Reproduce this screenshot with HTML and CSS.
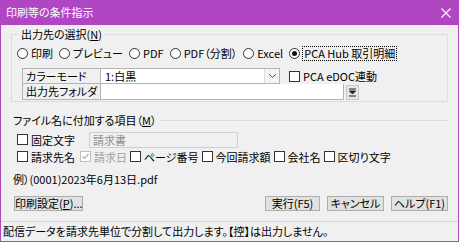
FILE: index.html
```html
<!DOCTYPE html>
<html lang="ja">
<head>
<meta charset="utf-8">
<link rel="stylesheet" href="styles.css">
</head>
<body>
<div class="window">
  <div class="titlebar">
    <span class="title">印刷等の条件指示</span>
    <span class="close">
      <svg width="10" height="10" viewBox="0 0 10 10"><path d="M0.5 0.5 L9.5 9.5 M9.5 0.5 L0.5 9.5" stroke="#ffffff" stroke-width="1.1"/></svg>
    </span>
  </div>
  <div class="content">
    <fieldset class="group">
      <legend class="legend">出力先の選択(<u>N</u>)</legend>
      <div class="radios">
        <label class="opt"><span class="radio"></span>印刷</label>
        <label class="opt"><span class="radio"></span>プレビュー</label>
        <label class="opt"><span class="radio"></span>PDF</label>
        <label class="opt"><span class="radio"></span>PDF（分割）</label>
        <label class="opt"><span class="radio"></span>Excel</label>
        <label class="opt"><span class="radio on"></span><span class="focus">PCA Hub 取引明細</span></label>
      </div>
      <div class="trow">
        <div class="tlabel">カラーモード</div>
        <div class="select"><span class="sval">1:白黒</span><span class="sarrow"><svg width="9" height="6" viewBox="0 0 9 6"><path d="M1 1 L4.5 4.5 L8 1" fill="none" stroke="#555" stroke-width="1"/></svg></span></div>
        <label class="opt eDoc"><span class="check"></span>PCA eDOC連動</label>
      </div>
      <div class="trow">
        <div class="tlabel">出力先フォルダ</div>
        <div class="input"></div>
        <span class="dropbtn"><svg width="9" height="9" viewBox="0 0 9 9"><path d="M1 1 H8 M1.5 3 L4.5 6 L7.5 3 Z M1 8 H8" fill="#222" stroke="#222" stroke-width="1"/></svg></span>
      </div>
    </fieldset>

    <div class="section">
      <span class="stitle">ファイル名に付加する項目（<u>M</u>）</span>
      <span class="sline"></span>
    </div>
    <div class="fixrow">
      <label class="opt"><span class="check"></span>固定文字</label>
      <div class="fixinput">請求書</div>
    </div>
    <div class="checks">
      <label class="opt"><span class="check"></span>請求先名</label>
      <label class="opt disabled"><span class="check checked dis"><svg width="9" height="9" viewBox="0 0 9 9"><path d="M1.5 4.5 L3.5 6.5 L7.5 2" fill="none" stroke="#b0b0b0" stroke-width="1.2"/></svg></span>請求日</label>
      <label class="opt"><span class="check"></span>ページ番号</label>
      <label class="opt"><span class="check"></span>今回請求額</label>
      <label class="opt"><span class="check"></span>会社名</label>
      <label class="opt"><span class="check"></span>区切り文字</label>
    </div>
    <div class="example">例）(0001)2023年6月13日.pdf</div>
    <div class="buttons">
      <button class="btn w69">印刷設定(<u>P</u>)...</button>
      <span class="spacer"></span>
      <button class="btn w55">実行(F5)</button>
      <button class="btn w57">キャンセル</button>
      <button class="btn w57">ヘルプ(F1)</button>
    </div>
  </div>
  <div class="status">配信データを請求先単位で分割して出力します。【控】は出力しません。</div>
</div>
</body>
</html>
```
FILE: styles.css
```css
* { box-sizing: border-box; }
html, body { margin: 0; padding: 0; }
body {
  font-family: "Noto Sans CJK JP", "Noto Sans", sans-serif;
  font-size: 11px;
  color: #000;
  font-feature-settings: "palt";
  background: #f0f0f0;
}
.window {
  width: 459px;
  height: 242px;
  padding: 0 1px 1px 1px;
  background: #b046c2;
  display: flex;
  flex-direction: column;
  forced-color-adjust: none;
}
.titlebar {
  height: 25px;
  background-image: linear-gradient(#b046c2, #b046c2);
  display: flex;
  align-items: center;
  justify-content: space-between;
  padding: 0 8px 0 6px;
  margin: 0 -1px;
  flex: none;
}
.title { color: #ffffff; font-size: 11px; line-height: 1; }
.close { display: flex; }
.content {
  flex: 1;
  background: #f0f0f0;
  padding: 2px 10px 0 10px;
  display: flex;
  flex-direction: column;
}
.group {
  margin: 0;
  border: 1px solid #dcdcdc;
  padding: 4px 0 5px 5px;
  height: 75px;
}
.legend {
  padding: 0 2px;
  margin-left: 2px;
  line-height: 14px;
}
u { text-decoration: underline; text-underline-offset: 1px; }
.radios {
  display: flex;
  gap: 6px;
  height: 16px;
  align-items: center;
}
.opt {
  display: flex;
  align-items: center;
  gap: 3px;
  line-height: 14px;
  white-space: nowrap;
}
.radio {
  width: 11px;
  height: 11px;
  border: 1px solid #333;
  border-radius: 50%;
  background: #fff;
  flex: none;
  position: relative;
}
.radio.on::after {
  content: "";
  position: absolute;
  left: 2px; top: 2px;
  width: 5px; height: 5px;
  border-radius: 50%;
  background: #111;
}
.focus {
  outline: 1px dotted #000;
  padding: 0 1px;
  line-height: 13px;
}
.trow {
  display: flex;
  align-items: center;
  height: 16px;
  margin-left: 5px;
}
.radios + .trow { margin-top: 7px; }
.tlabel {
  width: 79px;
  height: 16px;
  border: 1px solid #b4b4b4;
  padding-left: 3px;
  line-height: 14px;
  background: #f0f0f0;
}
.trow + .trow .tlabel { border-top: none; height: 16px; }
.select {
  width: 179px;
  height: 16px;
  border: 1px solid #b4b4b4;
  border-left: none;
  background: #fff;
  display: flex;
  justify-content: space-between;
  align-items: stretch;
}
.sval { padding-left: 4px; line-height: 14px; }
.sarrow {
  width: 15px;
  border-left: 1px solid #dcdcdc;
  background: #f4f4f4;
  display: flex;
  align-items: center;
  justify-content: center;
}
.eDoc { margin-left: 9px; }
.input {
  width: 243px;
  height: 16px;
  border: 1px solid #b4b4b4;
  border-left: none;
  border-top: none;
  background: #fff;
}
.dropbtn {
  margin-left: 2px;
  width: 13px;
  height: 15px;
  border: 1px solid #c8c8c8;
  background: #e6e6e6;
  display: flex;
  align-items: center;
  justify-content: center;
}
.check {
  width: 11px;
  height: 11px;
  border: 1px solid #333;
  background: #fff;
  flex: none;
  display: flex;
  align-items: center;
  justify-content: center;
}
.check.dis { border-color: #c0c0c0; }
.disabled { color: #a0a0a0; }
.section {
  display: flex;
  align-items: center;
  margin-top: 11px;
  height: 14px;
}
.stitle { padding-left: 2px; white-space: nowrap; }
.sline { flex: 1; height: 1px; background: #dcdcdc; margin-left: 4px; }
.fixrow {
  display: flex;
  align-items: center;
  margin-top: 4px;
  padding-left: 6px;
  height: 17px;
}
.fixinput {
  margin-left: 14px;
  width: 149px;
  height: 16px;
  border: 1px solid #cfcfcf;
  background: #f0f0f0;
  color: #8c8c8c;
  line-height: 14px;
  padding-left: 3px;
}
.checks {
  display: flex;
  align-items: center;
  gap: 3px;
  padding-left: 6px;
  height: 17px;
}
.checks .disabled { margin-left: 2px; }
.example {
  margin-top: 7px;
  padding-left: 2px;
  line-height: 14px;
}
.buttons {
  display: flex;
  align-items: center;
  margin-top: 10px;
  padding-left: 3px;
  gap: 7px;
}
.spacer { flex: 1; }
.btn {
  font: inherit;
  height: 15px;
  padding: 0;
  border: 1px solid #adadad;
  background: #e1e1e1;
  color: #000;
  line-height: 13px;
  margin: 0;
  white-space: nowrap;
  text-align: center;
}
.w69 { width: 69px; }
.w55 { width: 55px; }
.w57 { width: 57px; }
.status {
  flex: none;
  background: #f0f0f0;
  margin-top: auto;
  height: 20px;
  border-top: 1px solid #d7d7d7;
  padding-left: 2px;
  line-height: 18px;
  white-space: nowrap;
  overflow: hidden;
}
```
